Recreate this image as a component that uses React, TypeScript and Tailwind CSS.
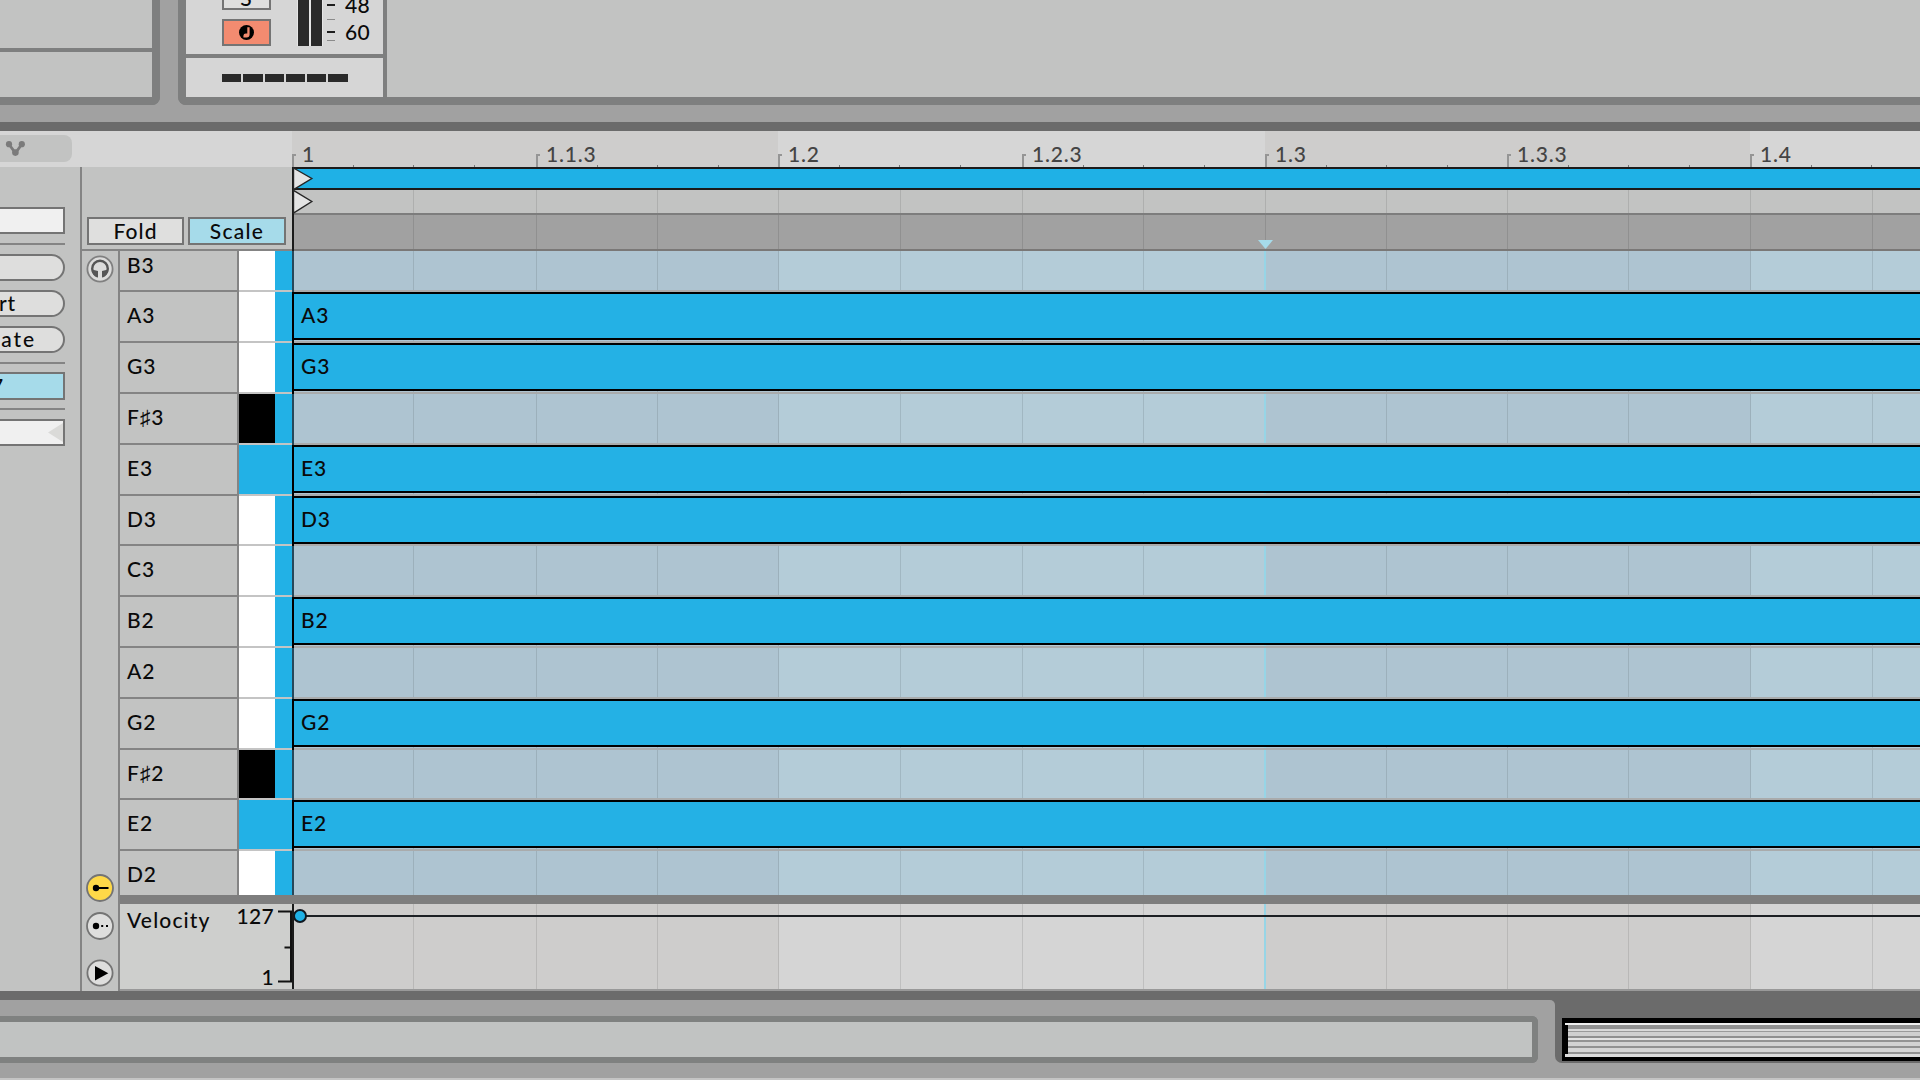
import clsx from "clsx";

type Lane = { note: string; key: "white" | "black" | "root"; playing?: boolean; height: string };

const lanes: Lane[] = [
  { note: "B3", key: "white", height: "h-[41px]" },
  { note: "A3", key: "white", playing: true, height: "h-[51px]" },
  { note: "G3", key: "white", playing: true, height: "h-[51px]" },
  { note: "F♯3", key: "black", height: "h-[51px]" },
  { note: "E3", key: "root", playing: true, height: "h-[51px]" },
  { note: "D3", key: "white", playing: true, height: "h-[50px]" },
  { note: "C3", key: "white", height: "h-[51px]" },
  { note: "B2", key: "white", playing: true, height: "h-[51px]" },
  { note: "A2", key: "white", height: "h-[51px]" },
  { note: "G2", key: "white", playing: true, height: "h-[51px]" },
  { note: "F♯2", key: "black", height: "h-[50px]" },
  { note: "E2", key: "root", playing: true, height: "h-[51px]" },
  { note: "D2", key: "white", height: "h-[44px]" },
];

const keyColors = {
  white: "bg-white",
  black: "bg-black",
  root: "bg-[#22b1e6]",
};

const bars = [
  { label: "1", width: "w-[244px]", light: false },
  { label: "1.1.3", width: "w-[242px]", light: false },
  { label: "1.2", width: "w-[244px]", light: true },
  { label: "1.2.3", width: "w-[243px]", light: true },
  { label: "1.3", width: "w-[242px]", light: false },
  { label: "1.3.3", width: "w-[243px]", light: false },
  { label: "1.4", width: "w-[170px]", light: true },
];

const cells = [
  { width: "w-[120px]", light: false },
  { width: "w-[123px]", light: false },
  { width: "w-[121px]", light: false },
  { width: "w-[121px]", light: false },
  { width: "w-[122px]", light: true },
  { width: "w-[122px]", light: true },
  { width: "w-[121px]", light: true },
  { width: "w-[122px]", light: true, marker: true },
  { width: "w-[121px]", light: false },
  { width: "w-[121px]", light: false },
  { width: "w-[121px]", light: false },
  { width: "w-[122px]", light: false },
  { width: "w-[122px]", light: true },
  { width: "w-[47px]", light: true },
];

const overviewStripes = [
  "h-[4px] bg-[#929292]",
  "h-[2px] bg-[#d9d9d9]",
  "h-[1px] bg-[#9a9a9a]",
  "h-[4px] bg-[#cfcfcf]",
  "h-[2px] bg-[#8f8f8f]",
  "h-[2px] bg-[#e2e2e2]",
  "h-[2px] bg-[#949494]",
  "h-[4px] bg-[#d3d3d3]",
  "h-[2px] bg-[#929292]",
  "h-[4px] bg-[#d6d6d6]",
  "h-[2px] bg-[#929292]",
];

function GridCells({ dark, light, marker }: { dark: string; light: string; marker?: boolean }) {
  return (
    <div className="col-start-1 row-start-1 flex">
      {cells.map((cell, i) => (
        <div
          key={i}
          className={clsx(
            "shrink-0",
            cell.width,
            cell.light ? light : dark,
            marker && cell.marker
              ? "border-r-2 border-[#97d5e6]"
              : i < cells.length - 1 && "border-r border-black/10",
          )}
        />
      ))}
    </div>
  );
}

function Mixer() {
  return (
    <div className="flex h-[105px] shrink-0">
      <div className="mr-[18px] h-[105px] w-[160px] rounded-br-[8px] border-r-8 border-b-8 border-[#7e7f7f] bg-[#c2c3c2]">
        <div className="h-[52px] border-b-4 border-[#7e7f7f]" />
      </div>
      <div className="flex h-[105px] flex-1 rounded-bl-[8px] border-b-8 border-l-8 border-[#7e7f7f] bg-[#c2c3c2]">
        <div className="w-[201px] border-r-4 border-[#7e7f7f] bg-[#d6d6d6]">
          <div className="flex h-[58px] border-b-4 border-[#7e7f7f] pl-[36px]">
            <div className="w-[49px]">
              <div className="flex h-[10px] items-end justify-center overflow-hidden border-2 border-t-0 border-[#747474] bg-[#dfdfde]">
                <span className="mb-[-2px] leading-[24px]">S</span>
              </div>
              <div className="mt-[9px] flex h-[27px] items-center justify-center border-2 border-[#747474] bg-[#f38b70]">
                <svg width="15" height="15" viewBox="0 0 15 15">
                  <circle cx="7.5" cy="7.5" r="7.5" fill="#000" />
                  <path d="M8.3 2.3h2.3v7.2a3 3 0 0 1-3 2.9H4.4V10.8a2.4 2.4 0 0 1 2.4-2.3h1.5z" fill="#f38b70" />
                </svg>
              </div>
            </div>
            <div className="ml-[26px] flex h-[46px] gap-[2px] bg-[#e6e6e6] px-px">
              <div className="w-[11px] bg-[#2a2a2a]" />
              <div className="w-[11px] bg-[#2a2a2a]" />
            </div>
            <div className="ml-[4px] w-[8px] pt-[4px]">
              <div className="h-[2px] bg-[#1d1d1d]" />
              <div className="mt-[13px] h-[1px] bg-[#8b8b8b]" />
              <div className="mt-[11px] h-[2px] bg-[#1d1d1d]" />
              <div className="mt-[7px] h-[1px] bg-[#8b8b8b]" />
            </div>
            <div className="mt-[-9px] ml-[10px] leading-[27px] tracking-[0.3px]">
              <div>48</div>
              <div>60</div>
            </div>
          </div>
          <div className="flex gap-[2px] pt-[16px] pl-[36px]">
            {[0, 1, 2, 3, 4, 5].map((i) => (
              <div key={i} className="h-[8px] w-[19.3px] bg-[#2a2a2a]" />
            ))}
          </div>
        </div>
      </div>
    </div>
  );
}

function Ruler() {
  return (
    <div className="flex h-[36px] shrink-0 bg-[#d6d6d6]">
      <div className="w-[292px]">
        <div className="mt-[4px] h-[27px] w-[72px] rounded-r-[8px] bg-[#c2c3c2] pt-[5px] pl-[5px]">
          <svg width="22" height="17" viewBox="0 0 22 17" fill="#7b7b7b">
            <path d="M4 4.2 10.4 13 16.8 4.2" fill="none" stroke="#7b7b7b" strokeWidth="2.8" />
            <circle cx="4" cy="4.2" r="3.1" />
            <circle cx="16.8" cy="4.2" r="3.1" />
            <circle cx="10.4" cy="12.6" r="3.3" />
          </svg>
        </div>
      </div>
      <div className="flex w-[1628px] overflow-hidden">
        {bars.map((bar) => (
          <div
            key={bar.label}
            className={clsx("grid shrink-0", bar.width, bar.light ? "bg-[#d6d6d6]" : "bg-[#cecdcc]")}
          >
            <div className="col-start-1 row-start-1 flex items-end">
              <div className="mr-[6px] h-[13px] w-[4px] border-t-2 border-l-2 border-[#959595]" />
              <span className="mb-px leading-[24px] tracking-[0.8px] text-[#444]">{bar.label}</span>
            </div>
            <div className="col-start-1 row-start-1 flex items-end">
              <div className="h-[2px] w-[62px] shrink-0 border-r border-[#777]" />
              <div className="h-[2px] w-[60px] shrink-0 border-r border-[#777]" />
              <div className="h-[2px] w-[61px] shrink-0 border-r border-[#777]" />
            </div>
          </div>
        ))}
      </div>
    </div>
  );
}

function ClipPanel() {
  return (
    <div className="w-[80px] overflow-hidden">
      <div className="w-[65px] pt-[40px]">
        <div className="h-[27px] border-2 border-l-0 border-[#747474] bg-[#f0f0f0]" />
        <div className="mt-[9px] h-[2px] bg-[#848484]" />
        <div className="mt-[9px] h-[27px] rounded-r-full border-2 border-l-0 border-[#747474] bg-[#dededd]" />
        <div className="mt-[9px] flex h-[27px] items-center justify-end rounded-r-full border-2 border-l-0 border-[#747474] bg-[#dededd] pr-[47px] pb-px">
          Invert
        </div>
        <div className="mt-[9px] flex h-[27px] items-center justify-end rounded-r-full border-2 border-l-0 border-[#747474] bg-[#dededd] pr-[27px] pb-px tracking-[1.9px]">
          Duplicate
        </div>
        <div className="mt-[9px] h-[2px] bg-[#848484]" />
        <div className="mt-[8px] flex h-[28px] items-center justify-end border-2 border-l-0 border-[#747474] bg-[#a6dbea] pr-[59px]">
          7
        </div>
        <div className="mt-[8px] h-[2px] bg-[#848484]" />
        <div className="mt-[9px] flex h-[27px] items-center justify-end border-2 border-l-0 border-[#747474] bg-[#f0f0f0]">
          <svg width="15" height="19" viewBox="0 0 15 19">
            <path d="M15 0v19L0 9.5z" fill="#dadad8" />
          </svg>
        </div>
      </div>
    </div>
  );
}

function SideButtons() {
  return (
    <div className="flex w-[38px] flex-col items-center border-r-2 border-[#848484] pt-[4px]">
      <svg width="28" height="28" viewBox="0 0 28 28">
        <circle cx="14" cy="14" r="12.6" fill="#dcdcdb" stroke="#808080" strokeWidth="1.8" />
        <path
          d="M8.6 19.2A7.8 7.8 0 1 1 19.4 19.2"
          fill="none"
          stroke="#565656"
          strokeWidth="2.4"
        />
        <path d="M5.8 14.6 12 16V22.6C8.6 22.2 5.8 18.8 5.8 14.6zM22.2 14.6 16 16V22.6C19.4 22.2 22.2 18.8 22.2 14.6z" fill="#565656" />
      </svg>
      <svg className="mt-[591px]" width="28" height="28" viewBox="0 0 28 28">
        <circle cx="14" cy="14" r="13" fill="#ffd948" stroke="#747474" strokeWidth="1.8" />
        <circle cx="10" cy="14" r="3.2" />
        <path d="M10 14h12.5" stroke="#000" strokeWidth="2" />
      </svg>
      <svg className="mt-[10px]" width="28" height="28" viewBox="0 0 28 28">
        <circle cx="14" cy="14" r="13" fill="#dededd" stroke="#747474" strokeWidth="1.8" />
        <circle cx="10" cy="14" r="3.2" />
        <path d="M15.2 13h2v2h-2zM20 13h2v2h-2z" />
      </svg>
      <svg className="mt-[19px]" width="28" height="28" viewBox="0 0 28 28">
        <circle cx="14" cy="14" r="12.6" fill="#dededd" stroke="#747474" strokeWidth="1.8" />
        <path d="M9 7v14.6l13.3-7.3z" />
      </svg>
    </div>
  );
}

function LoopLanes() {
  return (
    <div className="flex h-[84px] flex-col border-l-2 border-[#1b1b1b]">
      <div className="relative h-[23px] shrink-0 border-y-2 border-[#1b1b1b] bg-[#1fb1e6]">
        <svg className="absolute top-[-2px] left-[-1px] z-10" width="22" height="48" viewBox="0 0 22 48">
          <path d="M.5 1 18.8 11.5.5 22.6z" fill="#e4e4e4" stroke="#262626" strokeWidth="1.4" />
          <path d="M.5 23.4 18.8 34.5.5 46z" fill="#e4e4e4" stroke="#262626" strokeWidth="1.4" />
        </svg>
      </div>
      <div className="grid h-[25px] shrink-0 overflow-hidden border-b-2 border-[#7d7d7d]">
        <GridCells dark="bg-[#c2c3c2]" light="bg-[#c2c3c2]" />
      </div>
      <div className="relative grid h-[36px] shrink-0 overflow-hidden border-b-2 border-[#7a7877]">
        <GridCells dark="bg-[#a1a1a1]" light="bg-[#a1a1a1]" />
        <svg className="absolute bottom-0 left-[964px]" width="15" height="9" viewBox="0 0 15 9">
          <path d="M0 0h15L7.5 9z" fill="#a6dbea" />
        </svg>
      </div>
    </div>
  );
}

function PianoRoll() {
  return (
    <div className="h-[644px]">
      {lanes.map((lane, i) => {
        const first = i === 0;
        const last = i === lanes.length - 1;
        return (
          <div key={lane.note} className={clsx("flex overflow-hidden", lane.height)}>
            <div
              className={clsx(
                "flex w-[119px] shrink-0 border-r-2 border-[#848484] pl-[7px]",
                first ? "items-end" : "items-start",
                !last && "border-b-2",
              )}
            >
              <span className={first ? "mb-[12px] leading-[26px]" : "mt-[10px] leading-[26px]"}>{lane.note}</span>
            </div>
            <div className={clsx("flex w-[53px] shrink-0", !last && "border-b-2 border-[#c4c4c4]")}>
              <div className={clsx("w-[36px]", keyColors[lane.key])} />
              <div className="flex-1 bg-[#22b1e6]" />
            </div>
            <div
              className={clsx(
                "grid w-[1628px] shrink-0 overflow-hidden border-l-2",
                lane.playing ? "border-black" : "border-[#27485a]",
              )}
            >
              <GridCells dark="bg-[#aec4d1]" light="bg-[#b4ccd8]" marker />
              {!last && <div className="z-10 col-start-1 row-start-1 h-[2px] self-end bg-[#a9abac]" />}
              {lane.playing && (
                <div className="z-10 col-start-1 row-start-1 h-[48px] self-start border-y-2 border-black bg-[#24b1e5] pt-[8px] pl-[7px] leading-[26px]">
                  {lane.note}
                </div>
              )}
            </div>
          </div>
        );
      })}
    </div>
  );
}

function VelocityLane() {
  return (
    <div className="flex h-[96px] border-t-[9px] border-b-2 border-t-[#7e7e7e] border-b-[#999]">
      <div className="flex w-[172px] shrink-0 justify-between bg-[#cecfcd] pl-[7px]">
        <span className="mt-[3px] leading-[26px] tracking-[1.15px]">Velocity</span>
        <div className="flex">
          <div className="flex h-[86px] flex-col justify-between text-right tracking-[0.3px]">
            <span className="mt-[-1px] leading-[26px]">127</span>
            <span className="leading-[26px]">1</span>
          </div>
          <svg className="ml-[4px]" width="14" height="85" viewBox="0 0 14 85">
            <path d="M0 7.5h13v70H0M6.5 43.5h6" fill="none" stroke="#111" strokeWidth="2" />
          </svg>
        </div>
      </div>
      <div className="relative grid w-[1628px] shrink-0 overflow-hidden border-l-2 border-[#1b1b1b]">
        <GridCells dark="bg-[#cecdcc]" light="bg-[#d5d5d5]" marker />
        <div className="absolute top-[11px] left-[8px] h-[2px] w-full bg-[#1c2024]" />
        <div className="absolute top-[5px] left-[-1px] h-[14px] w-[14px] rounded-full border-2 border-[#101820] bg-[#1fb1e6]" />
      </div>
    </div>
  );
}

function ClipEditor() {
  return (
    <div className="flex h-[824px] shrink-0 bg-[#c2c3c2]">
      <ClipPanel />
      <div className="w-[1840px] border-l-2 border-[#848484]">
        <div className="flex">
          <div className="flex h-[84px] w-[210px] items-end gap-[4px] border-b-2 border-[#848484] pb-[4px] pl-[5px]">
            <div className="flex h-[28px] w-[97px] items-center justify-center border-2 border-[#747474] bg-[#dfdfde] tracking-[1.1px]">
              Fold
            </div>
            <div className="flex h-[28px] w-[98px] items-center justify-center border-2 border-[#747474] bg-[#a6dbea] tracking-[1.3px]">
              Scale
            </div>
          </div>
          <div className="w-[1628px]">
            <LoopLanes />
          </div>
        </div>
        <div className="flex h-[740px]">
          <SideButtons />
          <div className="w-[1800px]">
            <PianoRoll />
            <VelocityLane />
          </div>
        </div>
      </div>
    </div>
  );
}

function StatusBar() {
  return (
    <div className="h-[89px] shrink-0 border-t-[9px] border-[#6b6b6b] bg-[#a1a1a1]">
      <div className="flex h-[78px]">
        <div className="w-[1555px] bg-[#6b6b6b]">
          <div className="h-full rounded-tr-[5px] bg-[#a1a1a1] pt-[16px]">
            <div className="h-[47px] w-[1538px] rounded-r-[6px] border-6 border-l-0 border-[#7f8180] bg-[#c1c3c2]" />
          </div>
        </div>
        <div className="h-[63px] w-[365px] rounded-bl-[7px] bg-[#6b6b6b] pt-[18px] pl-[7px]">
          <div className="h-[43px] bg-black pt-[5px] pl-[3px]">
            <div className="h-[2px] bg-[#f0f0f0]" />
            <div className="pl-[3px]">
              {overviewStripes.map((stripe, i) => (
                <div key={i} className={stripe} />
              ))}
            </div>
            <div className="h-[3px] bg-[#dcdcdc]" />
          </div>
        </div>
      </div>
      <div className="h-[2px] bg-[#c4c4c4]" />
    </div>
  );
}

export default function App() {
  return (
    <div className="flex h-[1080px] w-[1920px] flex-col overflow-hidden bg-[#a1a1a1] font-['Lato','Liberation_Sans',sans-serif] text-[21px] leading-[24px] font-medium tracking-[0.9px] text-[#0a0a0a]">
      <Mixer />
      <div className="mt-[17px] h-[9px] shrink-0 bg-[#6b6b6b]" />
      <Ruler />
      <ClipEditor />
      <StatusBar />
    </div>
  );
}
